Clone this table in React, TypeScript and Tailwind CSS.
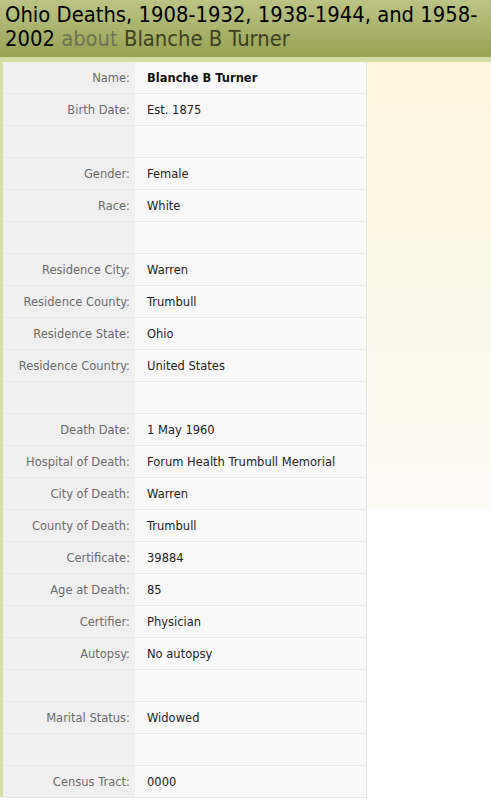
import React from 'react'

type Row = { label: string; value: string; bold?: boolean }

const rows: Row[] = [
  { label: 'Name:', value: 'Blanche B Turner', bold: true },
  { label: 'Birth Date:', value: 'Est. 1875' },
  { label: '', value: '' },
  { label: 'Gender:', value: 'Female' },
  { label: 'Race:', value: 'White' },
  { label: '', value: '' },
  { label: 'Residence City:', value: 'Warren' },
  { label: 'Residence County:', value: 'Trumbull' },
  { label: 'Residence State:', value: 'Ohio' },
  { label: 'Residence Country:', value: 'United States' },
  { label: '', value: '' },
  { label: 'Death Date:', value: '1 May 1960' },
  { label: 'Hospital of Death:', value: 'Forum Health Trumbull Memorial' },
  { label: 'City of Death:', value: 'Warren' },
  { label: 'County of Death:', value: 'Trumbull' },
  { label: 'Certificate:', value: '39884' },
  { label: 'Age at Death:', value: '85' },
  { label: 'Certifier:', value: 'Physician' },
  { label: 'Autopsy:', value: 'No autopsy' },
  { label: '', value: '' },
  { label: 'Marital Status:', value: 'Widowed' },
  { label: '', value: '' },
  { label: 'Census Tract:', value: '0000' },
]

export default function App() {
  return (
    <div className="min-h-screen bg-white font-['DejaVu_Sans',sans-serif]">
      {/* title bar */}
      <div className="h-[57px] bg-gradient-to-b from-[#bcc486] to-[#98a253] px-[5px] pt-[3px]">
        <h1 className="text-[21.8px] leading-[24px] text-black font-['DejaVu_Sans_Condensed','DejaVu_Sans',sans-serif]">
          Ohio Deaths, 1908-1932, 1938-1944, and 1958-
          <br />
          2002 <span className="text-[#6e7256]">about</span>{' '}
          <span className="text-[#3d4023]">Blanche B Turner</span>
        </h1>
      </div>
      <div className="h-[5px] bg-[#d4dea6]" />

      <div className="flex">
        <div className="w-[3px] h-[735px] bg-[#d6dfa8]" />
        <div className="w-[364px] border-r border-[#e4e4e4]">
          {rows.map((r, i) => (
            <div key={i} className="flex h-[32px] border-b border-[#e8e8e8] text-[11.5px]">
              <div className="w-[132px] bg-[#f0f0f0] text-right pr-[5px] text-[#6b6b6b] leading-[32px]">
                {r.label}
              </div>
              <div className={`flex-1 bg-[#f9f9f9] pl-[12px] leading-[32px] ${r.bold ? 'font-bold text-[#111]' : 'text-[#222]'}`}>
                {r.value}
              </div>
            </div>
          ))}
        </div>
        <div className="flex-1 h-[446px] bg-gradient-to-b from-[#fff7dc] via-[#fdf8e8] to-[#fdfbf5]" />
      </div>
    </div>
  )
}
